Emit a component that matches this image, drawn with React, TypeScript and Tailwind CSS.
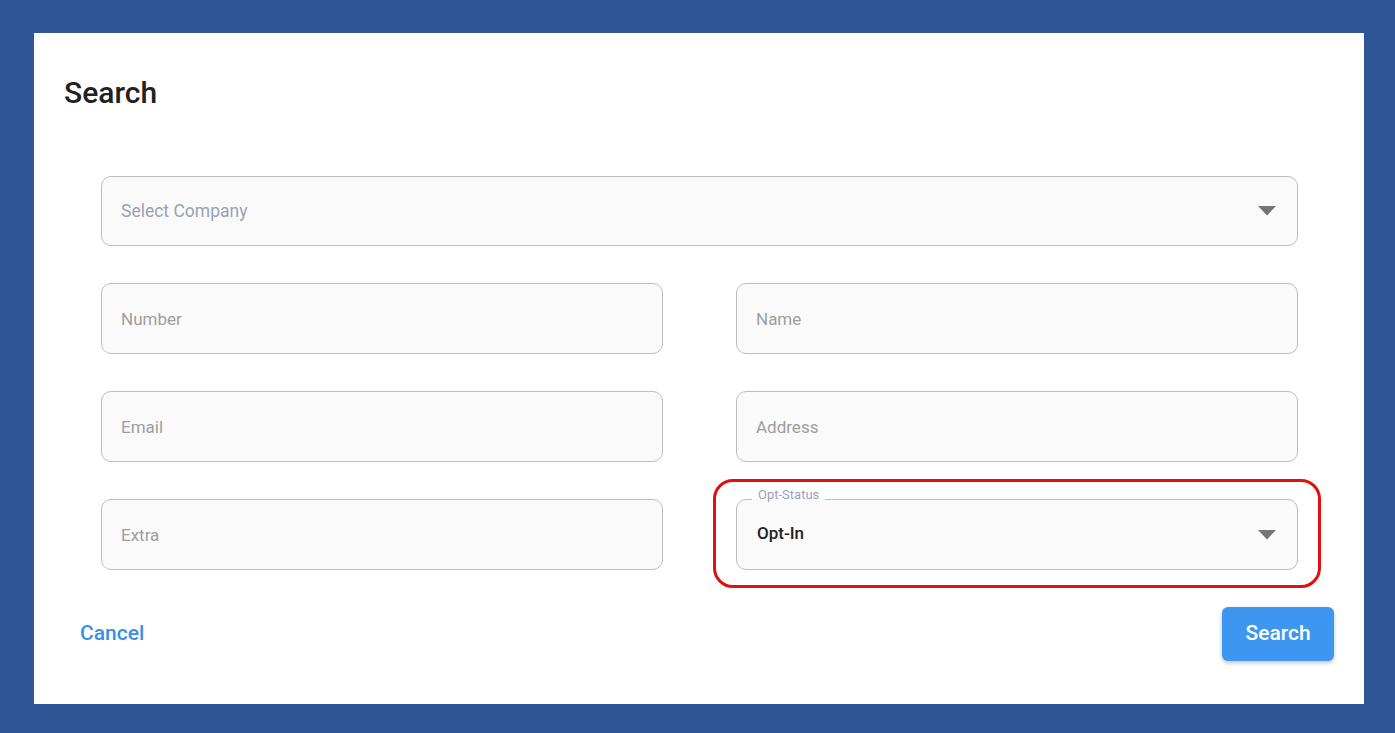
import { useState } from 'react'

function Caret() {
  return (
    <svg width="18" height="10" viewBox="0 0 18 10" className="shrink-0">
      <path d="M0 0 L18 0 L9 9.5 Z" fill="#757575" />
    </svg>
  )
}

function TextField({ placeholder }: { placeholder: string }) {
  const [value, setValue] = useState('')
  return (
    <input
      value={value}
      onChange={(e) => setValue(e.target.value)}
      placeholder={placeholder}
      className="h-[71px] w-full rounded-[10px] border border-[#bdbdbd] bg-[#fafafa] px-[19px] text-[17px] text-[#222] placeholder:text-[#9e9e9e] outline-none"
    />
  )
}

export default function App() {
  return (
    <div
      className="min-h-[733px] bg-[#2f5597] pt-[33px] pb-[29px] pl-[34px] pr-[31px]"
      style={{ fontFamily: 'Roboto, "Noto Sans", sans-serif' }}
    >
      <div className="h-[671px] bg-white flex flex-col">
        <h2 className="pl-[30px] pt-[43px] text-[30px] leading-[34px] font-medium text-[#212121]">
          Search
        </h2>

        <div className="mt-[66px] pl-[67px] pr-[66px] flex flex-col gap-[37px]">
          <div className="h-[70px] rounded-[10px] border border-[#bdbdbd] bg-[#fafafa] flex items-center justify-between pl-[19px] pr-[21px]">
            <span className="text-[17.5px] text-[#98a1b6]">Select Company</span>
            <Caret />
          </div>

          <div className="grid grid-cols-2 gap-x-[73px] gap-y-[37px]">
            <TextField placeholder="Number" />
            <TextField placeholder="Name" />
            <TextField placeholder="Email" />
            <TextField placeholder="Address" />
            <TextField placeholder="Extra" />

            <div className="relative">
              <fieldset className="h-[79px] -mt-[8px] rounded-[10px] border border-[#bdbdbd] bg-[#fafafa] pl-[20px] pr-[21px] flex items-center justify-between">
                <legend className="-ml-[5px] px-[6px] text-[13px] leading-[16px] text-[#98a1b6] relative -top-[4px]">
                  Opt-Status
                </legend>
                <span className="text-[17px] font-medium text-[#222] -mt-[9px]">Opt-In</span>
                <span className="-mt-[6px]">
                  <Caret />
                </span>
              </fieldset>
              <div className="pointer-events-none absolute -left-[23px] -right-[23px] -top-[20px] -bottom-[18px] rounded-[20px] border-[3px] border-[#e01010]" />
            </div>
          </div>
        </div>

        <div className="mt-[37px] pl-[46px] pr-[30px] flex items-center justify-between">
          <button className="text-[21px] font-medium text-[#3a8ee6]">Cancel</button>
          <button className="h-[54px] w-[112px] rounded-[6px] bg-[#3d96f0] text-[21px] font-medium text-white shadow-[0_2px_4px_rgba(0,0,0,0.25)]">
            Search
          </button>
        </div>
      </div>
    </div>
  )
}
